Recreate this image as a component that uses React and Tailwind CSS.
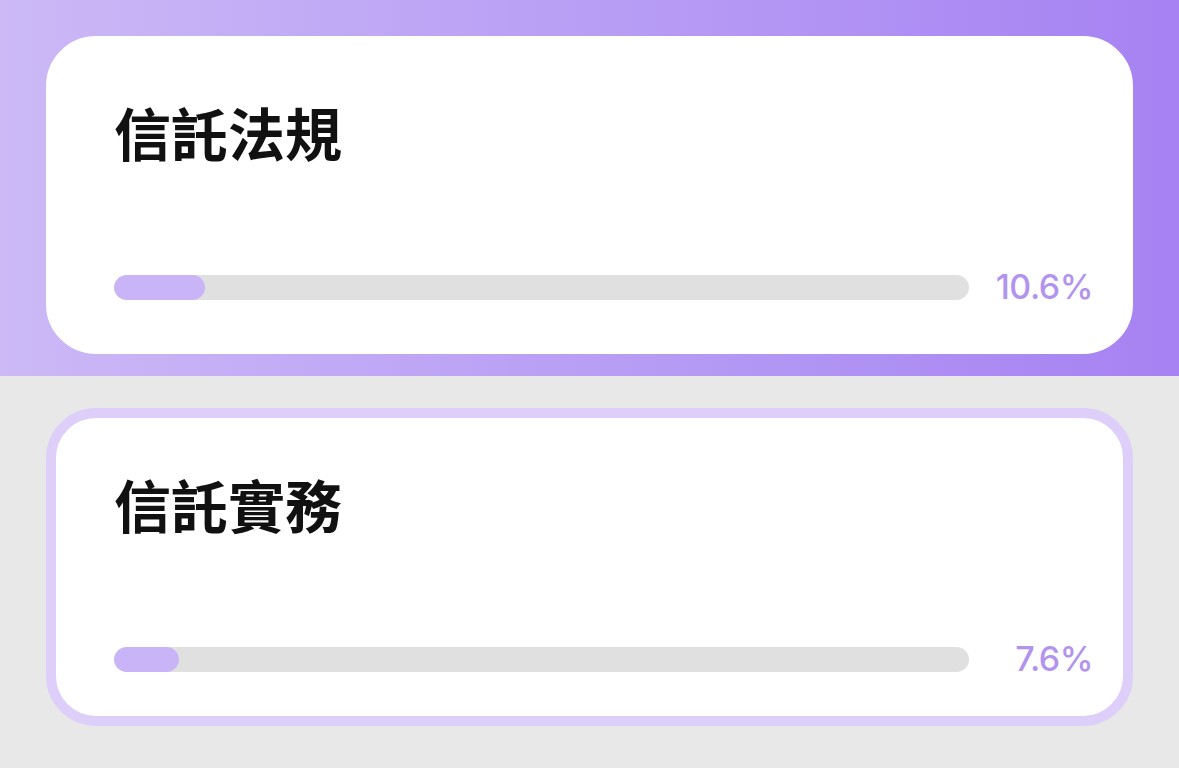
import React from "react";

const subjects = [
  { title: "信託法規", pct: 10.6, active: true },
  { title: "信託實務", pct: 7.6, active: false },
];

const SubjectCard = ({ title, pct, active }) => (
  <div
    className={`flex h-[318px] flex-col rounded-[50px] border-[10px] bg-white pt-[57px] pl-[58px] pr-[30px] pb-[40px] ${
      active ? "border-white" : "border-[#ddcff9]"
    }`}
  >
    <h2
      className="text-[57px] font-bold leading-none text-[#111]"
      style={{ fontFamily: '"Noto Sans CJK TC", "Noto Sans", sans-serif' }}
    >
      {title}
    </h2>
    <div className="mt-auto flex items-center gap-[20px]">
      <div className="h-[25px] flex-1 overflow-hidden rounded-full bg-[#e0e0e0]">
        <div
          className="h-full rounded-full bg-[#cab4f8]"
          style={{ width: `${pct}%` }}
        />
      </div>
      <span
        className="w-[104px] text-right text-[34px] font-medium leading-none tracking-[-0.5px] text-[#b294ee]"
        style={{ fontFamily: "Inter, 'Liberation Sans', sans-serif" }}
      >
        {pct}%
      </span>
    </div>
  </div>
);

const App = () => {
  return (
    <div className="min-h-screen w-full bg-[#e8e8e8]">
      <div className="h-[376px] bg-gradient-to-r from-[#ccb9f6] to-[#a682f2] px-[46px] pt-[36px]">
        <SubjectCard {...subjects[0]} />
      </div>
      <div className="px-[46px] pt-[32px] pb-[42px]">
        <SubjectCard {...subjects[1]} />
      </div>
    </div>
  );
};

export default App;
